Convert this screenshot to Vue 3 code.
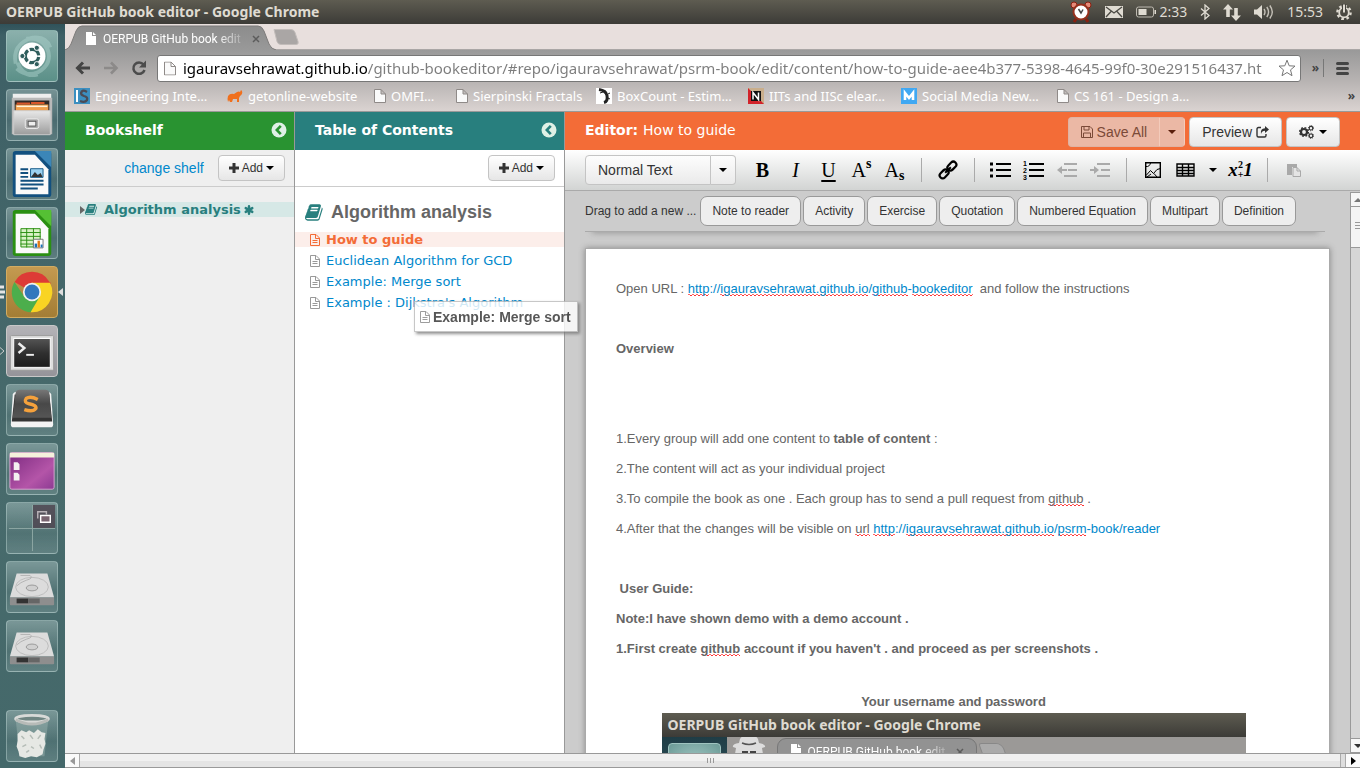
<script setup>
import { ref } from 'vue'

const url = ref('igauravsehrawat.github.io/github-bookeditor/#repo/igauravsehrawat/psrm-book/edit/content/how-to-guide-aee4b377-5398-4645-99f0-30e291516437.ht')
const bookmarks = [
  { icon: 'is', label: 'Engineering Inte…' },
  { icon: 'elephant', label: 'getonline-website' },
  { icon: 'page', label: 'OMFI…' },
  { icon: 'page', label: 'Sierpinski Fractals' },
  { icon: 'lizard', label: 'BoxCount - Estim…' },
  { icon: 'nptel', label: 'IITs and IISc elear…' },
  { icon: 'mash', label: 'Social Media New…' },
  { icon: 'page', label: 'CS 161 - Design a…' },
]
const launchers = ['dash', 'files', 'writer', 'calc', 'chrome', 'terminal', 'sublime', 'window', 'workspaces', 'drive', 'drive', 'trash']
const contents = ['How to guide', 'Euclidean Algorithm for GCD', 'Example: Merge sort', "Example : Dijkstra's Algorithm"]
const blocks = ['Note to reader', 'Activity', 'Exercise', 'Quotation', 'Numbered Equation', 'Multipart', 'Definition']
</script>

<template>
  <svg class="defs" aria-hidden="true">
    <defs>
      <linearGradient id="g-metal" x1="0" y1="0" x2="0" y2="1"><stop offset="0" stop-color="#e8e8e8" /><stop offset="1" stop-color="#9c9c9c" /></linearGradient>
      <linearGradient id="g-purple" x1="0" y1="0" x2="1" y2="1"><stop offset="0" stop-color="#7c2a80" /><stop offset=".65" stop-color="#b455a8" /><stop offset="1" stop-color="#8c3a92" /></linearGradient>
      <linearGradient id="g-dark" x1="0" y1="0" x2="0" y2="1"><stop offset="0" stop-color="#777" /><stop offset=".5" stop-color="#484848" /><stop offset="1" stop-color="#555" /></linearGradient>
      <linearGradient id="g-tab" x1="0" y1="0" x2="0" y2="1"><stop offset="0" stop-color="#8c8c8c" /><stop offset="1" stop-color="#999" /></linearGradient>
      <linearGradient id="g-term" x1="0" y1="0" x2="0" y2="1"><stop offset="0" stop-color="#555" /><stop offset=".5" stop-color="#303030" /><stop offset="1" stop-color="#1c1c1c" /></linearGradient>
    </defs>
    <symbol id="i-book" viewBox="0 0 1792 1792"><path fill="currentColor" d="M1639 478q40 57 18 129l-275 906q-19 64-76.5 107.5t-122.5 43.5h-923q-77 0-148.5-53.5t-99.5-131.5q-24-67-2-127 0-4 3-27t4-37q1-8-3-21.5t-3-19.5q2-11 8-21t16.5-23.5 16.5-23.5q23-38 45-91.5t30-91.5q3-10 .5-30t-.5-28q3-11 17-28t17-23q21-36 42-92t25-90q1-9-2.5-32t.5-28q4-13 22-30.5t22-22.5q19-26 42.5-84.5t27.5-96.5q1-8-3-25.5t-2-26.5q2-8 9-18t18-23 17-21q8-12 16.5-30.5t15-35 16-36 19.5-32 26.5-23.5 36-11.5 47.5 5.5l-1 3q38-9 51-9h761q74 0 114 56t18 130l-274 906q-36 119-71.5 153.5t-128.5 34.5h-869q-27 0-38 15-11 16-1 43 24 70 144 70h923q29 0 56-15.5t35-41.5l300-987q7-22 5-57 38 15 59 43zm-1064 2q-4 13 2 22.5t20 9.5h608q13 0 25.5-9.5t16.5-22.5l21-64q4-13-2-22.5t-20-9.5h-608q-13 0-25.5 9.5t-16.5 22.5zm-83 256q-4 13 2 22.5t20 9.5h608q13 0 25.5-9.5t16.5-22.5l21-64q4-13-2-22.5t-20-9.5h-608q-13 0-25.5 9.5t-16.5 22.5z" /></symbol>
    <symbol id="i-file" viewBox="0 0 10 12"><path fill="none" stroke="currentColor" d="M.5.5h5.5l3.500 3.500v7.500h-9zM5.500 .5v4h4M2.500 6.500h5M2.500 8.500h5" /></symbol>
    <symbol id="i-page" viewBox="0 0 12 14"><path fill="#fafafa" stroke="#8f8a88" d="M.5.5h6.500l4.500 4.500v8.500h-11zM7 .5v4.500h4.500" /></symbol>
    <symbol id="i-caret" viewBox="0 0 8 4"><path fill="currentColor" d="M0 0h8l-4 4z" /></symbol>
    <symbol id="i-plus" viewBox="0 0 10 10"><path fill="currentColor" d="M3.500 0h3v3.500h3.500v3h-3.500v3.500h-3v-3.500h-3.500v-3h3.500z" /></symbol>
    <symbol id="i-collapse" viewBox="0 0 16 16"><circle cx="8" cy="8" r="7.500" fill="#dff0e6" /><path fill="none" stroke="currentColor" stroke-width="2.600" d="M9.800 3.800l-4 4.200 4 4.200" /></symbol>
  </svg>

  <div class="desktop">
    <header class="panel">
      <strong class="panel-title">OERPUB GitHub book editor - Google Chrome</strong>
      <div class="indicators">
        <svg class="alarm" width="22" height="22" viewBox="0 0 22 22"><g fill="#e58a78" stroke="#8a2010"><circle cx="4" cy="4" r="3" /><circle cx="18" cy="4" r="3" /></g><path stroke="#8a2010" stroke-width="3" d="M6 18l-2 3M16 18l2 3" /><circle cx="11" cy="11" r="7.500" fill="#fff" stroke="#96301c" stroke-width="2" /><path d="M8.500 8l2.500 4 2-3.500" fill="none" stroke="#444" stroke-width="1.500" /></svg>
        <svg width="18" height="12" viewBox="0 0 18 12"><path fill="#dfdbd2" d="M0 0h18v12h-18z" /><path d="M1 1l8 6 8-6M1 11l5.500-6M17 11l-5.500-6" fill="none" stroke="#4a4943" stroke-width="1.300" /></svg>
        <span class="battery"><svg width="20" height="12" viewBox="0 0 20 12"><rect x=".5" y="1" width="17" height="10" rx="2" fill="none" stroke="#bdb9b0" /><path fill="#dfdbd2" d="M2.500 3h8v6h-8zM18.500 4h1.500v4h-1.500z" /></svg>2:33</span>
        <svg width="10" height="16" viewBox="0 0 10 16"><path d="M1 4.500l8 7-4 3.500v-14l4 3.500-8 7" fill="none" stroke="#dfdbd2" stroke-width="1.300" /></svg>
        <svg width="18" height="17" viewBox="0 0 18 17"><path fill="#dfdbd2" d="M5 0l5 5.500h-3.200v7.500h-3.600v-7.500h-3.200zM13 17l-5-5.500h3.200v-7.500h3.600v7.500h3.200z" /></svg>
        <svg width="20" height="14" viewBox="0 0 20 14"><path fill="#dfdbd2" d="M0 4.500h3l5-4.500v14l-5-4.500h-3z" /><path d="M10 4q2 3 0 6M12.800 2q3.500 5 0 10M15.800 .5q5 6.500 0 13" fill="none" stroke="#c4c0b7" stroke-width="1.400" /></svg>
        <span>15:53</span>
        <svg width="16" height="16" viewBox="0 0 16 16"><circle cx="8" cy="8.500" r="6.600" fill="none" stroke="#dfdbd2" stroke-width="2.400" stroke-dasharray="2.600 2.580" /><circle cx="8" cy="8.500" r="4.800" fill="none" stroke="#dfdbd2" stroke-width="1.800" /><path d="M8 8v-8" stroke="#44433d" stroke-width="4" /><path d="M8 8.500v-8" stroke="#dfdbd2" stroke-width="2" /></svg>
      </div>
    </header>

    <div class="workspace">
      <nav class="launcher" aria-label="Launcher">
        <button v-for="(name, i) in launchers" :key="i" type="button" class="tile" :class="name" :aria-label="name">
          <svg v-if="name === 'dash'" viewBox="0 0 52 52"><g fill="none" stroke="#a9cfc9" stroke-width="4" opacity=".5"><path d="M9 34q-4-20 17-27q15-2 19 10M42 18q6 16-10 25q-12 5-22-4M20 8q18-2 23 14M32 45q-15 4-21-12" /></g><circle cx="26" cy="26" r="14" fill="#fff" /><circle cx="26" cy="26" r="7" fill="none" stroke="#2f5d5c" stroke-width="3.400" stroke-dasharray="12.700 2" stroke-dashoffset="-1" /><g fill="#2f5d5c" stroke="#fff"><circle cx="16" cy="26" r="2.700" /><circle cx="31" cy="17.500" r="2.700" /><circle cx="31" cy="34.500" r="2.700" /></g></svg>
          <svg v-else-if="name === 'files'" viewBox="0 0 52 52"><path fill="#eee" d="M6 4h40v14h-40z" /><path fill="#b9b9b9" d="M5 8h42v38h-42z" /><path fill="#2f2a28" d="M8 11h36v11h-36z" /><path fill="#f0a04e" d="M9 15h34v7h-34z" /><path d="M10 14h14M25 13.500h14" stroke="#d8572a" stroke-width="2" /><path d="M10 17h32" stroke="#fff3dc" stroke-width="1.500" /><path fill="url(#g-metal)" stroke="#ccc" d="M7 21.500h38v25h-38z" /><rect x="19" y="30" width="14" height="10" rx="2" fill="#aaa" stroke="#eee" /><rect x="22" y="32.500" width="8" height="5" fill="#eee" stroke="#555" /></svg>
          <svg v-else-if="name === 'writer' || name === 'calc'" viewBox="0 0 52 52" class="doc"><rect x="6" y="2" width="40" height="48" rx="3" fill="currentColor" /><path fill="#fafafa" d="M9 6h20l14 15v26h-34z" /><path class="fold" d="M29 2h17v17z" /><template v-if="name === 'writer'"><path d="M14 21h8M14 25h8M14 29h8M14 33h24M14 37h24M14 41h18" stroke="currentColor" stroke-width="2" /><path fill="#9bd1f0" stroke="#155a87" d="M24.500 20.500h13v9h-13z" /><path fill="#333" d="M25 29l4-5 3 3 3-2 2 4z" /></template><template v-else><path fill="#d9f2c6" d="M14 21h21v20h-21z" /><path fill="none" stroke="currentColor" d="M14.500 21.500h20v19h-20zM14 25.500h21M14 29.500h21M14 33.500h21M14 37.500h21M20.500 21v20M27.500 21v20" /><path fill="#fff" stroke="#777" d="M27.500 32.500h10v9h-10z" /><path stroke-width="2.500" stroke="#1b72b8" d="M30 41v-4" /><path stroke-width="2.500" stroke="#e07a18" d="M33 41v-7" /><path stroke-width="2" stroke="#1b72b8" d="M36 41v-3" /></template></svg>
          <svg v-else-if="name === 'chrome'" viewBox="0 0 52 52"><path fill="#dd3b36" d="M26 26L7.800 15.500A21 21 0 0 1 44.200 15.500L46 17z" /><path fill="#f9d423" d="M26 26L26 16.500h18.700A21 21 0 0 1 24.500 47z" /><path fill="#4cae4c" d="M26 26L34 31L24.500 47A21 21 0 0 1 7.800 15.500L18 31z" /><circle cx="26" cy="26" r="9.500" fill="#f1f1f1" /><circle cx="26" cy="26" r="7.700" fill="#3277bd" /></svg>
          <svg v-else-if="name === 'terminal'" viewBox="0 0 52 52"><rect x="3.500" y="10" width="45" height="36" rx="1" fill="#dedede" stroke="#999" /><rect x="7" y="13" width="38" height="30" fill="url(#g-term)" stroke="#fff" /><path fill="none" stroke="#eee" stroke-width="2.600" d="M12 18l6 5-6 5" /><path stroke="#eee" stroke-width="2" d="M20 30h8" /></svg>
          <svg v-else-if="name === 'sublime'" viewBox="0 0 52 52"><path fill="#f3f3f3" d="M6 10q1-3 4-3h32q3 0 4 3l2 31q0 3-3 3h-38q-3 0-3-3z" /><path fill="#343434" d="M8 10h36l3 28h-42z" /><path fill="url(#g-dark)" d="M9 8q1-3 4-3h27q3 0 4 3l2 26h-40z" /><path d="M32 15q-8-4-12-1q-3 4 3 5.500q8 1.500 7 5q-3 4-12 1" fill="none" stroke="#f5a13c" stroke-width="3.600" /></svg>
          <svg v-else-if="name === 'window'" viewBox="0 0 52 52"><rect x="3" y="9" width="46" height="38" rx="2" fill="url(#g-purple)" stroke="#d6a7d0" /><path fill="#f5f1dc" d="M3 9h46v5h-46z" /><path fill="#f4f0f0" d="M7 19h4l2 2v6h-6zM7 30h4l2 2v6h-6z" /></svg>
          <svg v-else-if="name === 'workspaces'" viewBox="0 0 52 52"><path fill="#4f4751" opacity=".85" d="M27 2h23v24h-23z" /><path stroke="#8fa9a6" d="M26.500 2v48M2 26.500h48" /><path fill="none" stroke="#b9b3b8" stroke-width="1.500" d="M32 16v-7h9v3" /><path fill="#77636f" stroke="#fff" stroke-width="1.500" d="M35 13h10v7h-10z" /></svg>
          <svg v-else-if="name === 'drive'" viewBox="0 0 52 52"><path fill="#dcdcdc" d="M10 12h32l7 25h-46z" /><path fill="#8e8e8e" d="M3 37h46v7q0 1-1 1h-44q-1 0-1-1z" /><path fill="#333" d="M10 38h12v5h-12z" /><path fill="#666" d="M22 38h12v5h-12z" /><ellipse cx="26" cy="26" rx="17" ry="10" fill="none" stroke="#bcbcbc" /><ellipse cx="26" cy="27" rx="6" ry="3" fill="#d0d0d0" stroke="#999" /><path d="M14 14h10q4 3-4 5q-6 2-10 6" fill="none" stroke="#b3b3b3" /></svg>
          <svg v-else viewBox="0 0 52 52"><path fill="#a7bfba" opacity=".4" d="M9 8h34l-4 39h-26z" /><ellipse cx="26" cy="8" rx="17" ry="3.500" fill="#6f8582" stroke="#d8dad8" stroke-width="3" /><path d="M9 9q17 9 34 0" fill="none" stroke="#b7bbb8" stroke-width="3" /><path fill="#e6e8e4" d="M11 24l4-4 5 2 3-2 5 3 4-4 4 3 4 1-1 6 1 5-2 6-1 5-6 3-6-1-6 2-6-2-1-5-2-5 1-6z" /><path d="M15 26l3 3M24 25l3 4M35 25l-3 4M16 37l4-2M25 37l3 2M34 35l2 4M20 43l3-2" fill="none" stroke="#b4bcb6" stroke-width="1.500" /></svg>
          <svg v-if="name === 'chrome'" class="mark-left" width="5" height="14" viewBox="0 0 5 14"><path stroke="#e4e4e4" stroke-width="3" d="M0 2h4M0 7h5M0 12h4" /></svg>
          <svg v-if="name === 'chrome'" class="mark-right" width="5" height="8" viewBox="0 0 5 8"><path fill="#ddd" d="M5 0v8l-5-4z" /></svg>
          <svg v-if="name === 'terminal'" class="mark-left" width="5" height="8" viewBox="0 0 5 8"><path fill="none" stroke="#ccc" d="M0 .5l4 3.500-4 3.500" /></svg>
        </button>
      </nav>

      <section class="browser">
        <div class="tabstrip">
          <div class="tab">
            <svg class="tab-shape" width="212" height="25" viewBox="0 0 212 25"><path fill="url(#g-tab)" stroke="#7d7b7a" d="M0 25q4-1 6-6l5-13q2-5 6-5h176q4 0 6 5l5 13q2 5 7 6" /></svg>
            <svg width="10" height="13" viewBox="0 0 10 13"><path fill="#fff" d="M0 0h6v4h4v9h-10zM7 0l3 3h-3z" /></svg>
            <span class="tab-label">OERPUB GitHub book edit</span>
            <button type="button" aria-label="Close tab"><svg width="8" height="8" viewBox="0 0 8 8"><path stroke="#5c5c5c" stroke-width="1.500" d="M1 1l6 6M7 1l-6 6" /></svg></button>
          </div>
          <button type="button" class="newtab" aria-label="New tab"><svg width="26" height="16" viewBox="0 0 26 16"><path fill="#aaa6a5" stroke="#c2bcba" d="M1 .5h17q3 0 4 3l3 9q1 3-2 3h-15q-3 0-4-3z" /></svg></button>
        </div>
        <div class="chrome-bars">
          <div class="toolbar">
            <button type="button" aria-label="Back"><svg width="16" height="14" viewBox="0 0 16 14"><path d="M15 7h-12M8 1.500l-5.500 5.500 5.500 5.500" fill="none" stroke="#444" stroke-width="3" /></svg></button>
            <button type="button" aria-label="Forward"><svg width="16" height="14" viewBox="0 0 16 14"><path d="M1 7h12M8 1.500l5.500 5.500-5.500 5.500" fill="none" stroke="#8c8a89" stroke-width="2.600" /></svg></button>
            <button type="button" aria-label="Reload"><svg width="16" height="16" viewBox="0 0 16 16"><path d="M12.500 4.500a5.700 5.700 0 1 0 1 5.500" fill="none" stroke="#4c4c4c" stroke-width="2.500" /><path fill="#4c4c4c" d="M15 .5v7h-7z" /></svg></button>
            <div class="omnibox">
              <svg width="12" height="15" viewBox="0 0 12 14"><use href="#i-page" /></svg>
              <input v-model="url" type="text" aria-label="Address" spellcheck="false">
              <button type="button" aria-label="Bookmark this page"><svg width="18" height="18" viewBox="0 0 18 18"><path d="M9 1.200l2.200 5.600 5.800.3-4.500 3.800 1.500 5.800-5-3.200-5 3.200 1.500-5.800-4.500-3.800 5.800-.3z" fill="#fff" stroke="#777" /></svg></button>
            </div>
            <button type="button" class="more" aria-label="More extensions">»</button>
            <button type="button" class="menu" aria-label="Menu"><svg width="13" height="13" viewBox="0 0 13 13"><path stroke="#444" stroke-width="3" stroke-linecap="round" d="M1.500 1.500h10M1.500 6.500h10M1.500 11.500h10" /></svg></button>
          </div>
          <div class="bookmarks">
            <div class="bookmark-list">
              <a v-for="b in bookmarks" :key="b.label" href="#">
                <svg v-if="b.icon === 'page'" width="12" height="14"><use href="#i-page" /></svg>
                <svg v-else width="16" height="16" viewBox="0 0 16 16">
                  <template v-if="b.icon === 'is'"><path fill="#3c8fc0" d="M0 0h16v16h-16z" /><path fill="#fff" d="M2 2h2v12h-2z" /><path d="M13 4q-5-3-6 1q0 2 3 3q4 1 3 4q-2 3-7 1" fill="none" stroke="#4b4b55" stroke-width="2.300" /></template>
                  <path v-else-if="b.icon === 'elephant'" fill="#f0701e" d="M1 14q-1-3 0-6q2-3 6-2l3-2q2-1 3 0l1-2 1 1q1 3-2 5l-1 2 0 4h-2v-3h-4l-1 3h-2l-1-2-1 2z" />
                  <template v-else-if="b.icon === 'lizard'"><path fill="#fff" d="M0 0h16v16h-16z" /><path d="M3 1.500q7 1 8 6q1 6-3 7" fill="none" stroke="#222" stroke-width="3" /><path d="M4 5l3-1M12 6l2-1M12 10l2 1" stroke="#222" /></template>
                  <template v-else-if="b.icon === 'nptel'"><path fill="#c9ae8b" d="M0 0h16v16h-16z" /><path fill="#d2232a" d="M0 0l16 16h-16z" /><path fill="#111" d="M3 3h10v10h-10z" /><path fill="none" stroke="#fff" stroke-width="1.500" d="M5 11.500v-7l5.500 7v-7" /></template>
                  <template v-else><path fill="#41a8f2" d="M0 0h16v16h-16z" /><path fill="none" stroke="#fff" stroke-width="2.600" d="M4 12v-7l4 5 4-5v7" /></template>
                </svg>
                <span>{{ b.label }}</span>
              </a>
            </div>
            <button type="button" class="more" aria-label="More bookmarks">»</button>
          </div>
        </div>

        <main class="page">
          <div class="columns">
            <section class="shelf">
              <h2 class="col-head green">Bookshelf<button type="button" aria-label="Collapse bookshelf"><svg width="16" height="16"><use href="#i-collapse" /></svg></button></h2>
              <div class="col-bar">
                <a href="#">change shelf</a>
                <button type="button" class="btn small"><svg width="10" height="10"><use href="#i-plus" /></svg>Add<svg width="8" height="4"><use href="#i-caret" /></svg></button>
              </div>
              <a href="#" class="shelf-item"><svg width="5" height="8" viewBox="0 0 5 8"><path fill="#666" d="M0 0l5 4-5 4z" /></svg><svg class="shelf-book" width="13" height="13"><use href="#i-book" /></svg><span>Algorithm analysis</span><svg width="10" height="10" viewBox="0 0 10 10"><path stroke="currentColor" stroke-width="2.400" stroke-linecap="round" d="M5 1.200v7.600M1.700 3.100l6.600 3.800M8.300 3.100l-6.600 3.800" /></svg></a>
            </section>

            <section class="toc">
              <h2 class="col-head teal">Table of Contents<button type="button" aria-label="Collapse contents"><svg width="16" height="16"><use href="#i-collapse" /></svg></button></h2>
              <div class="col-bar">
                <button type="button" class="btn small"><svg width="10" height="10"><use href="#i-plus" /></svg>Add<svg width="8" height="4"><use href="#i-caret" /></svg></button>
              </div>
              <h3><svg width="19" height="19"><use href="#i-book" /></svg>Algorithm analysis</h3>
              <ul>
                <li v-for="(item, i) in contents" :key="item" :class="{ current: i === 0 }"><a href="#"><svg width="10" height="12"><use href="#i-file" /></svg>{{ item }}</a></li>
              </ul>
            </section>

            <section class="editor">
              <div class="col-head orange">
                <h2>Editor: <span>How to guide</span></h2>
                <div class="actions">
                  <div class="split disabled">
                    <button type="button" class="btn" disabled><svg width="12" height="12" viewBox="0 0 12 12"><path d="M.5.5h8.500l2.500 2.500v8.500h-11zM3 .5v3.500h5v-3.500M2.500 11.500v-4.500h7v4.500" fill="none" stroke="currentColor" /></svg>Save All</button>
                    <button type="button" class="btn" disabled aria-label="Save options"><svg width="8" height="4"><use href="#i-caret" /></svg></button>
                  </div>
                  <button type="button" class="btn">Preview<svg width="13" height="12" viewBox="0 0 13 12"><path d="M5 1.500h-2.500q-1.500 0-1.500 1.500v6.500q0 1.500 1.500 1.500h6q1.500 0 1.500-1.500v-1.500" fill="none" stroke="currentColor" stroke-width="1.400" /><path fill="currentColor" d="M9 0l4 3.500-4 3.500v-2.200q-3 0-4 3.200q-1-5.500 4-5.800z" /></svg></button>
                  <button type="button" class="btn gears" aria-label="Settings"><svg width="15" height="14" viewBox="0 0 15 14"><g fill="none" stroke="currentColor"><circle cx="5" cy="7" r="3" stroke-width="2.200" /><circle cx="5" cy="7" r="4.400" stroke-width="1.400" stroke-dasharray="1.800 1.650" /><circle cx="12" cy="3.200" r="1.800" stroke-width="1.200" /><circle cx="12" cy="10.800" r="1.800" stroke-width="1.200" /><circle cx="12" cy="3.200" r="2.600" stroke-dasharray="1 1.040" /><circle cx="12" cy="10.800" r="2.600" stroke-dasharray="1 1.040" /></g></svg><svg width="8" height="4"><use href="#i-caret" /></svg></button>
                </div>
              </div>

              <div class="format" role="toolbar" aria-label="Formatting">
                <div class="split">
                  <button type="button" class="btn style-name">Normal Text</button>
                  <button type="button" class="btn" aria-label="Text styles"><svg width="8" height="4"><use href="#i-caret" /></svg></button>
                </div>
                <div class="tools">
                  <button type="button"><b>B</b></button>
                  <button type="button"><i>I</i></button>
                  <button type="button"><u>U</u></button>
                  <button type="button" class="script">A<sup>s</sup></button>
                  <button type="button" class="script">A<sub>s</sub></button>
                  <span class="sep"></span>
                  <button type="button" aria-label="Link"><svg width="20" height="20" viewBox="0 0 20 20"><g transform="rotate(-45 10 10)" fill="none" stroke="#000" stroke-width="2.200"><rect x="-.5" y="7" width="10" height="6" rx="3" /><rect x="10.500" y="7" width="10" height="6" rx="3" /><path d="M6 10h8" stroke-width="2" /></g></svg></button>
                  <span class="sep"></span>
                  <button type="button" aria-label="Bulleted list"><svg width="21" height="16" viewBox="0 0 21 16"><path stroke="#000" stroke-width="2" d="M6 2h15M6 8h15M6 14h15" /><path stroke="#000" stroke-width="3" d="M0 2h3M0 8h3M0 14h3" /></svg></button>
                  <button type="button" aria-label="Numbered list" class="numbered"><span><small>1</small><small>2</small><small>3</small></span><svg width="15" height="16" viewBox="0 0 15 16"><path stroke="#000" stroke-width="2" d="M0 2h15M0 8h15M0 14h15" /></svg></button>
                  <button type="button" aria-label="Outdent"><svg width="20" height="16" viewBox="0 0 20 16"><path stroke="#aaa" stroke-width="2" d="M7 2h13M11 8h9M7 14h13M3 8h7" /><path fill="#aaa" d="M0 8l5-4v8z" /></svg></button>
                  <button type="button" aria-label="Indent"><svg width="20" height="16" viewBox="0 0 20 16"><path stroke="#aaa" stroke-width="2" d="M7 2h13M11 8h9M7 14h13M0 8h6" /><path fill="#aaa" d="M9 8l-5-4v8z" /></svg></button>
                  <span class="sep"></span>
                  <button type="button" aria-label="Image"><svg width="16" height="16" viewBox="0 0 16 16"><path d="M.7.7h14.600v14.600h-14.600z" fill="none" stroke="#000" stroke-width="1.400" /><path d="M1 4.500q3.500.5 4.500-3.500M1 13.500l4.500-5 3 3 3.500-4 3.500-1M2 15l4-3M9 11.500l3 3.500" fill="none" stroke="#000" /></svg></button>
                  <button type="button" aria-label="Table"><svg width="19" height="14" viewBox="0 0 19 14"><path d="M1 1h17v12h-17zM1 4.500h17M1 7.500h17M1 10.500h17M6.500 1v12M12.500 1v12" fill="none" stroke="#000" stroke-width="1.400" /></svg></button>
                  <button type="button" class="narrow" aria-label="Table options"><svg width="8" height="4"><use href="#i-caret" /></svg></button>
                  <button type="button" class="math"><span>x</span><span class="stack"><small>2</small><small>+</small></span><span>1</span></button>
                  <span class="sep"></span>
                  <button type="button" aria-label="Paste"><svg width="14" height="14" viewBox="0 0 14 14"><path fill="#a9a9a9" d="M0 1h10v3h-5v8h-5z" /><path fill="#e4e4e4" stroke="#a9a9a9" d="M6 4.500h4l3.500 3.500v5.500h-7.500zM10 4.500v3.500h3.500" /></svg></button>
                </div>
              </div>

              <div class="canvas">
                <div class="canvas-body">
                  <div class="blocks"><span>Drag to add a new ...</span><button v-for="b in blocks" :key="b" type="button">{{ b }}</button></div>
                  <article class="paper">
                    <p>Open URL : <a href="#"><span class="sp">http</span>://<span class="sp">igauravsehrawat.github.io</span>/<span class="sp">github</span>-<span class="sp">bookeditor</span></a>&nbsp; and follow the instructions</p>
                    <p>&nbsp;</p>
                    <p><b>Overview</b></p>
                    <p>&nbsp;</p>
                    <p>&nbsp;</p>
                    <p>1.Every group will add one content to <b>table of content</b> :</p>
                    <p>2.The content will act as your individual project</p>
                    <p>3.To compile the book as one . Each group has to send a pull request from <span class="sp">github</span> .</p>
                    <p>4.After that the changes will be visible on <span class="sp">url</span> <a href="#"><span class="sp">http</span>://<span class="sp">igauravsehrawat.github.io</span>/<span class="sp">psrm</span>-book/reader</a></p>
                    <p>&nbsp;</p>
                    <p><b>&nbsp;User Guide:</b></p>
                    <p><b>Note:I have shown demo with a demo account .</b></p>
                    <p><b>1.First create <span class="sp">github</span> account if you haven't . and proceed as per screenshots .</b></p>
                    <figure>
                      <figcaption>Your username and password</figcaption>
                      <div class="shot">
                        <div class="shot-title">OERPUB GitHub book editor - Google Chrome</div>
                        <div class="shot-body">
                          <div class="shot-launcher"><span></span></div>
                          <svg width="36" height="26" viewBox="0 0 36 26"><path fill="#ddd" d="M9 2q2-4 9-4t9 4l1 4q7 1 6 4l-3 1 1 6-4 9h-20l-4-9 1-6-3-1q-1-3 6-4z" /><path d="M11 6q7 3 14 0" fill="none" stroke="#555" stroke-width="1.500" /><path fill="#444" d="M11 14h6v3h-6zM19 14h6v3h-6z" /></svg>
                          <div class="shot-tab"><svg width="10" height="13" viewBox="0 0 10 13"><path fill="#fff" d="M0 0h6v4h4v9h-10zM7 0l3 3h-3z" /></svg><span>OERPUB GitHub book edit</span><svg class="shot-close" width="8" height="8" viewBox="0 0 8 8"><path stroke="#5c5c5c" stroke-width="1.500" d="M1 1l6 6M7 1l-6 6" /></svg></div>
                          <div class="shot-new"></div>
                        </div>
                      </div>
                    </figure>
                  </article>
                </div>
                <div class="vbar"><span class="vbtn"><svg width="8" height="4" viewBox="0 0 8 4"><path fill="#777" d="M4 0l4 4h-8z" /></svg></span><span class="vthumb"></span><span class="vtrack"></span><span class="vbtn"><svg width="8" height="4"><use href="#i-caret" /></svg></span></div>
              </div>
            </section>
          </div>

          <div class="hbar"><span class="hbtn"><svg width="5" height="8" viewBox="0 0 5 8"><path fill="#999" d="M5 0v8l-5-4z" /></svg></span><span class="hthumb"><i></i><i></i><i></i></span><span class="hgap"></span><span class="hbtn"><svg width="5" height="8" viewBox="0 0 5 8"><path fill="#000" d="M0 0v8l5-4z" /></svg></span></div>

          <div class="drag-helper"><svg width="10" height="12"><use href="#i-file" /></svg>Example: Merge sort</div>
        </main>
      </section>
    </div>
  </div>
</template>

<style>
body { margin: 0; overflow: hidden; }
</style>

<style scoped>
* { box-sizing: border-box; }
button { font: inherit; color: inherit; background: none; border: 0; padding: 0; margin: 0; }
a { text-decoration: none; color: #0088cc; }
h2, h3, p, ul, figure { margin: 0; padding: 0; font-weight: inherit; }
svg { display: block; flex: none; }
.defs { position: absolute; width: 0; height: 0; }
.desktop { height: 100vh; display: flex; flex-direction: column; overflow: hidden; font: 14px/20px "Liberation Sans", Arial, sans-serif; color: #333; }

.panel { flex: none; height: 24px; display: flex; align-items: center; justify-content: space-between; padding: 0 8px 0 6px; background: linear-gradient(#5e5c51, #3c3b37); color: #dfdbd2; font-family: "Noto Sans", sans-serif; font-size: 14px; }
.indicators { display: flex; align-items: center; gap: 13px; }
.battery { display: flex; align-items: center; gap: 3px; }

.workspace { flex: 1; min-height: 0; display: flex; }
.launcher { flex: none; width: 65px; padding: 6px; display: flex; flex-direction: column; gap: 7px; background: linear-gradient(#30525a, #3e6066 12px, #486b6c 60%, #44686a); }
.tile { position: relative; width: 52px; height: 52px; flex: none; border: 1px solid rgba(190, 215, 212, .45); border-radius: 4px; background: linear-gradient(rgba(200, 220, 218, .4), rgba(200, 220, 218, .08) 60%, rgba(200, 220, 218, .2)); }
.tile > svg:first-child { width: 50px; height: 50px; }
.tile.dash { background: linear-gradient(#8bb0ac, #5b9088); }
.tile.chrome { background: linear-gradient(#c49a50, #a37d35); border-color: #d2ac62; }
.tile.terminal { background: linear-gradient(#b4b3b7, #95949a); border-color: #c8c8c8; }
.tile.writer { color: #12507f; }
.tile.calc { color: #2a8f12; }
.tile.writer .fold { fill: #3b86b8; }
.tile.calc .fold { fill: #55c034; }
.tile.trash { margin-top: auto; }
.mark-left { position: absolute; left: -7px; top: 50%; transform: translateY(-50%); }
.mark-right { position: absolute; right: -6px; top: 50%; transform: translateY(-50%); }

.browser { flex: 1; min-width: 0; display: flex; flex-direction: column; }
.tabstrip { flex: none; height: 25px; display: flex; background: #e8dfdd; font-family: Roboto, sans-serif; }
.tab { position: relative; width: 208px; height: 25px; padding: 4px 9px 0 21px; display: flex; align-items: center; gap: 7px; color: #fff; font-size: 12px; }
.tab > * { position: relative; }
.tab .tab-shape { position: absolute; left: 0; top: 1px; }
.tab-label { flex: 1; white-space: nowrap; mask-image: linear-gradient(to right, #000 82%, rgba(0, 0, 0, .25)); }
.tab button { padding: 0 4px; }
.newtab { align-self: center; }
.chrome-bars { flex: none; background: linear-gradient(#999, #b7b3b2 50%, #dad3d1); border-bottom: 1px solid #999; border-top: 1px solid #aaa6a5; }
.toolbar { height: 34px; display: flex; align-items: center; padding: 2px 11px 0 10px; }
.toolbar > button { margin-right: 12px; }
.toolbar > .more { margin: 0 4px 0 11px; }
.toolbar > .menu { margin: 0; padding-left: 12px; height: 18px; border-left: 1px solid #777; }
.omnibox { flex: 1; min-width: 0; height: 27px; display: flex; align-items: center; gap: 7px; padding: 0 4px 0 6px; background: #fff; border: 1px solid #777; border-radius: 3px; margin-left: -2px; }
.omnibox input { flex: 1; min-width: 0; border: 0; padding: 0; outline: 0; height: 24px; font: 15px "Noto Sans", sans-serif; color: transparent; background: linear-gradient(to right, #000 184px, #7c7c7c 184px); background-clip: text; -webkit-background-clip: text; }
.omnibox button { margin-left: -7px; }
.more { font: bold 12px/16px "Noto Sans", sans-serif; color: #444; }
.bookmarks { height: 27px; display: flex; align-items: center; justify-content: space-between; padding: 0 5px 4px 9px; }
.bookmark-list { display: grid; grid-template-columns: 153px 147px 82px 140px 152px 153px 156px auto; }
.bookmark-list a { display: flex; align-items: center; gap: 5px; color: #fff; font: 13px/20px "Noto Sans", sans-serif; white-space: nowrap; }

.page { flex: 1; min-height: 0; position: relative; display: flex; flex-direction: column; }
.columns { flex: 1; min-height: 0; display: flex; }
.shelf { flex: none; width: 230px; background: #efefef; border-right: 1px solid #999; }
.toc { flex: none; width: 270px; background: #fff; border-right: 1px solid #999; }
.editor { flex: 1; min-width: 0; display: flex; flex-direction: column; }
.col-head { flex: none; height: 38px; padding: 0 7px 2px 20px; display: flex; align-items: center; justify-content: space-between; color: #fff; font: bold 14px/20px "DejaVu Sans", sans-serif; }
.green { background: #299331; }
.green button { color: #299331; }
.teal { background: #287f7e; }
.teal button { color: #287f7e; }
.orange { background: #f36c37; padding: 0 20px; }
.orange h2 { font-weight: bold; padding-bottom: 2px; font-size: 14px; }
.orange h2 span { font-weight: normal; }
.col-bar { height: 37px; padding-right: 9px; display: flex; align-items: center; justify-content: flex-end; gap: 14px; border-bottom: 1px solid #ccc; }
.btn { height: 30px; display: flex; align-items: center; justify-content: center; gap: 4px; padding: 0 12px; border: 1px solid #c4c4c4; border-radius: 4px; background: linear-gradient(#fff, #e6e6e6); color: #333; font: 14px/20px "Liberation Sans", Arial, sans-serif; }
.btn.small { height: 26px; font-size: 12px; padding: 0 10px; gap: 3px; }
.btn use[href="#i-caret"] { color: #000; }
.shelf-item { display: flex; align-items: center; height: 15px; margin-top: 15px; padding-left: 15px; background: #d6e8e6; color: #287f7e; font: bold 13px/15px "DejaVu Sans", sans-serif; }
.shelf-item span { margin: 0 3px 0 6px; }
.toc h3 { display: flex; align-items: center; gap: 7px; margin: 15px 0 10px; padding-left: 10px; font: bold 18px/20px "Liberation Sans", Arial, sans-serif; color: #666; }
.toc h3 svg { color: #287f7e; }
.toc ul { list-style: none; }
.toc li { height: 15px; margin-bottom: 6px; padding-left: 15px; font: 13px/15px "DejaVu Sans", sans-serif; }
.toc li a { display: flex; align-items: center; gap: 6px; }
.toc li svg { color: #999; }
.toc li.current { background: #fceeea; font-weight: bold; }
.toc li.current a, .toc li.current svg { color: #f36c37; }

.actions { display: flex; gap: 4px; padding-top: 2px; }
.split { display: flex; }
.split .btn:first-child { border-radius: 4px 0 0 4px; }
.split .btn:last-child { border-radius: 0 4px 4px 0; border-left: 0; padding: 0 8px; }
.split.disabled .btn { background: #ebb8a5; border-color: #dfb3a3; color: #7b4a38; border-right-color: #f3cbbb; }
.split.disabled use[href="#i-caret"] { color: #5a1f0c; }
.gears { gap: 5px; }
.format { flex: none; height: 41px; display: flex; align-items: center; padding: 0 20px; background: linear-gradient(#fff, #d2d4d3); border-bottom: 1px solid #aaa; }
.format .btn { background: linear-gradient(#fdfdfd, #eaeaea); }
.format .style-name { width: 126px; justify-content: flex-start; }
.tools { display: flex; align-items: center; margin-left: 10px; color: #000; font: 20px/24px "Liberation Serif", serif; }
.tools button { width: 33px; height: 30px; display: flex; align-items: center; justify-content: center; }
.tools .narrow { width: 22px; }
.tools .script { padding: 3px 0; }
.sep { width: 20px; height: 24px; background: linear-gradient(#aaa, #aaa) center / 1px 100% no-repeat; }
.tools u { text-underline-offset: 3px; }
.tools sup, .tools sub { font: bold 14px/12px "Liberation Serif", serif; }
.tools sup { align-self: flex-start; }
.tools sub { align-self: flex-end; }
.numbered { gap: 2px; }
.numbered span { display: flex; flex-direction: column; }
.numbered small { font: bold 7px/7px "Liberation Sans", sans-serif; }
.math { font: italic bold 19px/20px "Liberation Serif", serif; }
.math .stack { display: flex; flex-direction: column; font-style: normal; }
.math small { font: bold 10px/10px "Liberation Serif", serif; }

.canvas { flex: 1; min-height: 0; display: flex; background: #ccc; overflow: hidden; }
.canvas-body { flex: 1; min-width: 0; padding: 0 20px; overflow: hidden; }
.blocks { display: flex; align-items: center; gap: 2px; height: 41px; margin-right: 5px; border-bottom: 1px solid #aaa; box-shadow: 0 8px 6px -7px #999; font-size: 12px; white-space: nowrap; }
.blocks span { margin-right: 2px; }
.blocks button { height: 30px; padding: 0 10px; border: 1px solid #999; border-radius: 7px; background: #eee; padding: 0 11px; }
.paper { margin-top: 16px; padding: 30px 38px 400px 30px; border: 1px solid #aaa; background: #fff; box-shadow: 0 0 6px #888; font-size: 13px; color: #666; }
.paper p { margin-bottom: 10px; white-space: nowrap; }
.sp { background: repeating-linear-gradient(to right, #f66 0 2px, transparent 2px 4px) 0 calc(100% - 1px) / 100% 1px no-repeat, repeating-linear-gradient(to right, transparent 0 2px, #f33 2px 4px) 0 100% / 100% 1px no-repeat; }
.paper figure { margin-top: 33px; font-weight: bold; text-align: center; }
.shot { max-width: 584px; margin: 1px auto 0; text-align: left; font-family: "Noto Sans", sans-serif; background: #9b9997; }
.shot-title { height: 24px; padding-left: 6px; font-size: 14px; line-height: 24px; background: linear-gradient(#5e5c51, #3c3b37); color: #dfdbd2; }
.shot-body { display: flex; height: 60px; }
.shot-launcher { width: 65px; padding: 6px; background: linear-gradient(#1f3d46, #345a62); margin-right: 4px; }
.shot-launcher span { display: block; height: 52px; border: 1px solid #9fc4c0; border-radius: 4px; background: radial-gradient(circle at 50% 50%, #fff 14px, #8fb8b4 15px, #6b9a96); }
.shot-tab { display: flex; gap: 7px; width: 200px; height: 28px; margin: 1px 0 0 10px; padding: 5px 8px 0 13px; border: 1px solid #777; border-radius: 9px 9px 0 0; background: #929292; color: #fff; font: 12px/16px Roboto, sans-serif; }
.shot-tab span { flex: 1; white-space: nowrap; mask-image: linear-gradient(to right, #000 82%, rgba(0, 0, 0, .25)); }
.shot-close { margin: 4px; }
.shot-new { width: 24px; height: 16px; margin: 6px 0 0 4px; border: 1px solid #888; border-radius: 3px 6px 3px 6px; background: #aaa; transform: skewX(20deg); }

.vbar { flex: none; width: 10px; display: flex; flex-direction: column; border-left: 1px solid #999; background: #d6d6d6; margin-top: 1px; overflow: hidden; }
.vbtn { height: 15px; display: flex; align-items: center; justify-content: flex-start; padding-left: 3px; background: #f6f6f6; border: solid #999; border-width: 1px 0; }
.vthumb { height: 41px; background: repeating-linear-gradient(#999 0 1px, transparent 1px 3px) 4px 15px / 8px 9px no-repeat, #f4f4f4; border-bottom: 1px solid #999; }
.vtrack { flex: 1; }
.hbar { flex: none; height: 15px; display: flex; border: solid #999; border-width: 1px 0; background: #ddd; }
.hbtn { width: 14px; display: flex; align-items: center; justify-content: center; background: #fafafa; }
.hthumb { flex: 1; display: flex; align-items: center; justify-content: center; gap: 2px; border: solid #aaa; border-width: 0 1px; background: linear-gradient(#f0f0f0 50%, #e4e4e4 50%); }
.hthumb i { width: 1px; height: 5px; background: #999; }
.hgap { width: 5px; border-right: 1px solid #aaa; }

.drag-helper { position: absolute; left: 349px; top: 189px; height: 31px; display: flex; align-items: center; gap: 3px; padding: 0 6px 0 5px; border: 1px solid #bbb; background: #fff; opacity: .82; box-shadow: 2px 2px 3px #777; font-weight: bold; }
.drag-helper svg { color: #888; }
</style>
